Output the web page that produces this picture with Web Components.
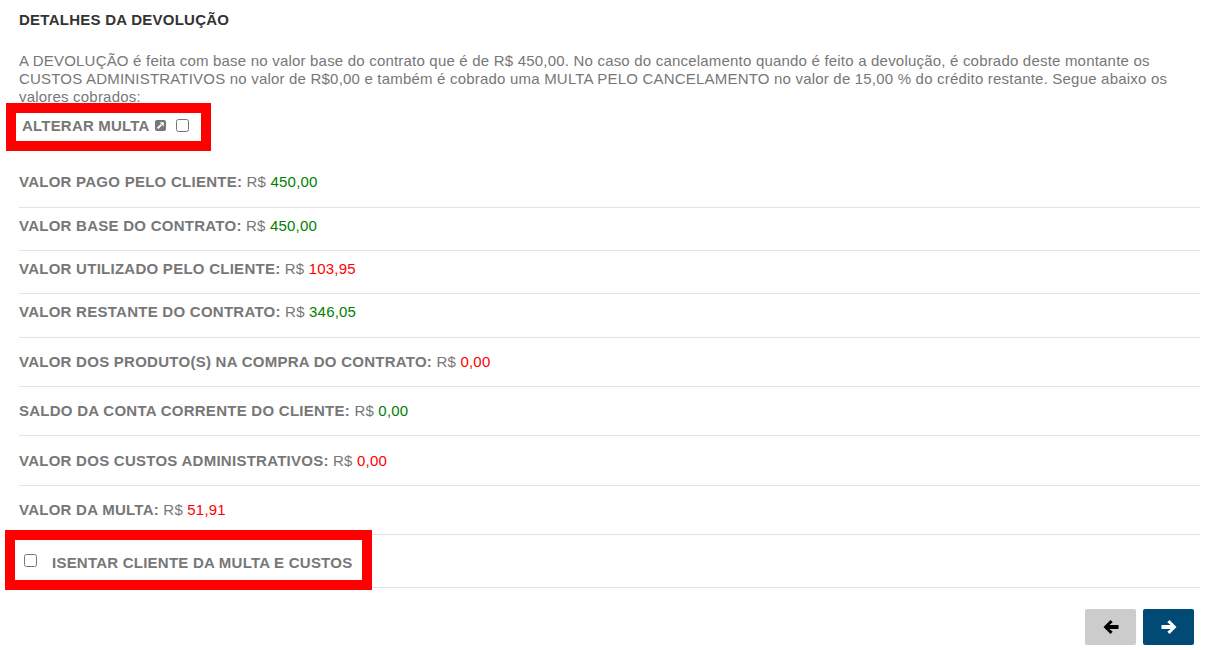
<!DOCTYPE html>
<html lang="pt-BR">
<head>
<meta charset="utf-8">
<title>Detalhes da devolução</title>
<style>
  html, body { margin: 0; padding: 0; background: #fff; }
  body { font-family: "Liberation Sans", Arial, sans-serif; font-size: 15px; letter-spacing: .2px; color: #777; }
</style>
</head>
<body>
<refund-page></refund-page>

<script>
class ValueRow extends HTMLElement {
  constructor() {
    super();
    this.attachShadow({ mode: 'open' }).innerHTML = `
      <style>
        :host {
          display: block;
          box-sizing: border-box;
          height: var(--row-height, 43.33px);
          padding-top: var(--row-top, 8px);
          border-bottom: 1px solid #e3e3e3;
          line-height: 20px;
          color: #777;
        }
        b { font-weight: 700; letter-spacing: .26px; }
        .value { color: var(--value-color, green); }
      </style>
      <b><slot name="label"></slot></b> R$ <span class="value"><slot name="value"></slot></span>
    `;
  }
}

class NavButton extends HTMLElement {
  constructor() {
    super();
    const next = this.getAttribute('dir') === 'next';
    this.attachShadow({ mode: 'open' }).innerHTML = `
      <style>
        :host {
          display: flex;
          align-items: center;
          justify-content: center;
          width: 51px;
          height: 36px;
          border-radius: 2px;
          background: ${next ? '#004a75' : '#ccc'};
          color: ${next ? '#fff' : '#000'};
        }
        svg { width: 16px; height: 14px; fill: currentColor; }
      </style>
      <svg viewBox="0 0 16 14">
        <path transform="${next ? 'matrix(-1 0 0 1 16 0)' : ''}" d="M7.5 0 L9.7 2.2 L6.4 5 H15.5 V9 H6.4 L9.7 11.8 L7.5 14 L.5 7 Z"/>
      </svg>
    `;
  }
}

class RedFrame extends HTMLElement {
  constructor() {
    super();
    this.attachShadow({ mode: 'open' }).innerHTML = `
      <style>
        :host {
          position: absolute;
          box-sizing: border-box;
          border: 10px solid #f00;
          pointer-events: none;
        }
      </style>
    `;
  }
}

class RefundPage extends HTMLElement {
  constructor() {
    super();
    this.attachShadow({ mode: 'open' }).innerHTML = `
      <style>
        :host {
          display: block;
          position: relative;
          box-sizing: border-box;
          width: 1209px;
          height: 650px;
          padding: 11px 9px 0 19px;
          overflow: hidden;
        }
        h4 {
          margin: 0;
          font-size: 15px;
          line-height: 18px;
          font-weight: 700;
          color: #333;
          letter-spacing: .25px;
        }
        p {
          margin: 23px 0 0;
          line-height: 18px;
          color: #777;
        }
        .alter {
          display: flex;
          align-items: center;
          box-sizing: border-box;
          height: 58.27px;
          padding: 0 0 20.27px 3px;
          font-weight: 700;
        }
        .alter svg { width: 11px; height: 11px; margin-left: 5px; }
        .alter input { margin: 0 0 0 10px; }
        .wide { --row-height: 49.4px; --row-top: 14.3px; }
        .exempt {
          display: flex;
          align-items: center;
          gap: 15px;
          box-sizing: border-box;
          height: 53px;
          padding: 3px 0 0 5px;
          border-bottom: 1px solid #e3e3e3;
          font-weight: 700;
          letter-spacing: .23px;
        }
        input {
          appearance: none;
          box-sizing: border-box;
          width: 13px;
          height: 13px;
          margin: 0;
          border: 1px solid #767676;
          border-radius: 2.5px;
          background: #fff;
        }
        .exempt input { position: relative; top: -2px; }
        .actions {
          display: flex;
          justify-content: flex-end;
          gap: 7px;
          padding: 21px 6px 0 0;
        }
        .red { --value-color: #f00; }
        .box-alter { left: 6px; top: 103px; width: 205px; height: 48px; }
        .box-exempt { left: 5px; top: 530px; width: 367px; height: 60px; }
      </style>

      <h4>DETALHES DA DEVOLUÇÃO</h4>
      <p>A DEVOLUÇÃO é feita com base no valor base do contrato que é de R$ 450,00. No caso do cancelamento quando é feito a devolução, é cobrado deste montante os CUSTOS ADMINISTRATIVOS no valor de R$0,00 e também é cobrado uma MULTA PELO CANCELAMENTO no valor de 15,00 % do crédito restante. Segue abaixo os valores cobrados:</p>

      <div class="alter">
        ALTERAR MULTA
        <svg viewBox="0 0 11 11">
          <rect width="11" height="11" rx="2" fill="#777"/>
          <path d="M2.6 8.4 L6.4 4.6" stroke="#fff" stroke-width="2" fill="none"/>
          <path d="M4.6 2.2 H8.8 V6.4 Z" fill="#fff"/>
        </svg>
        <input type="checkbox">
      </div>

      <value-row><span slot="label">VALOR PAGO PELO CLIENTE:</span><span slot="value">450,00</span></value-row>
      <value-row><span slot="label">VALOR BASE DO CONTRATO:</span><span slot="value">450,00</span></value-row>
      <value-row class="red"><span slot="label">VALOR UTILIZADO PELO CLIENTE:</span><span slot="value">103,95</span></value-row>
      <value-row><span slot="label">VALOR RESTANTE DO CONTRATO:</span><span slot="value">346,05</span></value-row>
      <value-row class="wide red"><span slot="label">VALOR DOS PRODUTO(S) NA COMPRA DO CONTRATO:</span><span slot="value">0,00</span></value-row>
      <value-row class="wide"><span slot="label">SALDO DA CONTA CORRENTE DO CLIENTE:</span><span slot="value">0,00</span></value-row>
      <value-row class="wide red"><span slot="label">VALOR DOS CUSTOS ADMINISTRATIVOS:</span><span slot="value">0,00</span></value-row>
      <value-row class="wide red"><span slot="label">VALOR DA MULTA:</span><span slot="value">51,91</span></value-row>

      <label class="exempt"><input type="checkbox"><span>ISENTAR CLIENTE DA MULTA E CUSTOS</span></label>

      <div class="actions">
        <nav-button dir="prev"></nav-button>
        <nav-button dir="next"></nav-button>
      </div>

      <red-frame class="box-alter"></red-frame>
      <red-frame class="box-exempt"></red-frame>
    `;
  }
}

customElements.define('value-row', ValueRow);
customElements.define('nav-button', NavButton);
customElements.define('red-frame', RedFrame);
customElements.define('refund-page', RefundPage);
</script>
</body>
</html>
